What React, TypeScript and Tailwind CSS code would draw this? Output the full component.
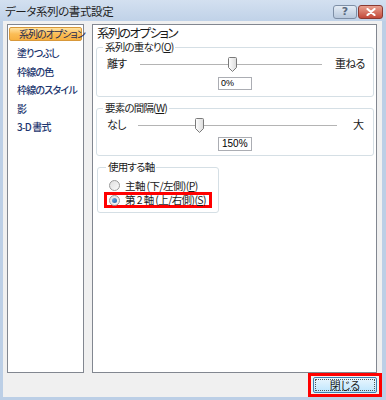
import React from "react";

const jp = { fontFamily: '"Noto Sans CJK JP", "Noto Sans", sans-serif' };

function Thumb() {
  return (
    <svg width="9" height="15" viewBox="0 0 9 15" className="block">
      <defs>
        <linearGradient id="tg" x1="0" x2="1" y1="0" y2="0">
          <stop offset="0" stopColor="#ffffff" />
          <stop offset="1" stopColor="#dcdcdc" />
        </linearGradient>
      </defs>
      <path d="M0.5 1.5 Q0.5 0.5 1.5 0.5 L7.5 0.5 Q8.5 0.5 8.5 1.5 L8.5 10.5 L4.5 14.5 L0.5 10.5 Z" fill="url(#tg)" stroke="#7a7a7a" />
    </svg>
  );
}

function SliderRow({ left, right, leftW, trackW, thumbX, gap }: { left: string; right: string; leftW: number; trackW: number; thumbX: number; gap: number }) {
  return (
    <div className="flex items-center h-[15px]">
      <div className="text-[11px] leading-[12px] tracking-[-0.8px] text-[#1a1a1a] -mt-[3px] whitespace-nowrap" style={{ width: leftW }}>{left}</div>
      <div className="relative h-[15px]" style={{ width: trackW }}>
        <div className="absolute left-0 right-0 top-[7px] h-[1px] bg-[#b4b4b4]" />
        <div className="absolute left-0 right-0 top-[8px] h-[1px] bg-[#ffffff]" />
        <div className="absolute top-0" style={{ left: thumbX }}>
          <Thumb />
        </div>
      </div>
      <div className="text-[11px] leading-[12px] tracking-[-0.8px] text-[#1a1a1a] -mt-[3px] whitespace-nowrap" style={{ marginLeft: gap }}>{right}</div>
    </div>
  );
}

function Radio({ checked }: { checked?: boolean }) {
  return (
    <div className="w-[11px] h-[11px] shrink-0 rounded-full border border-[#9a9a9a] bg-gradient-to-br from-[#e0e0e0] to-[#fafafa] flex items-center justify-center">
      {checked && <div className="w-[5px] h-[5px] rounded-full bg-gradient-to-br from-[#7ab8e8] to-[#1c5fa8]" />}
    </div>
  );
}

export default function App() {
  const navItems = ["塗りつぶし", "枠線の色", "枠線のスタイル", "影", "3-D 書式"];
  return (
    <div className="w-[386px] h-[400px] overflow-hidden bg-[#bccfe6] flex flex-col [font-feature-settings:'palt']" style={jp}>
      {/* title bar */}
      <div className="h-[21px] flex items-center bg-gradient-to-b from-[#d3e0f0] to-[#c0d2e8] pl-[5px] pr-[3px]">
        <div className="text-[11.5px] leading-[14px] tracking-[-0.4px] text-[#1e1e1e] mt-[1px] whitespace-nowrap">データ系列の書式設定</div>
        <div className="ml-auto flex gap-[1px] mt-[2px]">
          <div className="w-[24px] h-[14px] rounded-[3px] border border-[#7e8fa6] bg-gradient-to-b from-[#e4ecf5] to-[#b8c8dc] flex items-center justify-center text-[11px] leading-[11px] font-bold text-[#5a6a80]" style={{ fontFamily: '"DejaVu Sans", sans-serif' }}>?</div>
          <div className="w-[25px] h-[14px] rounded-[3px] border border-[#8a3a32] bg-gradient-to-b from-[#e8a090] to-[#c2483a] flex items-center justify-center">
            <svg width="10" height="8" viewBox="0 0 10 8">
              <path d="M1.5 1 L8.5 7 M8.5 1 L1.5 7" stroke="#ffffff" strokeWidth="2.2" strokeLinecap="round" />
            </svg>
          </div>
        </div>
      </div>
      {/* body */}
      <div className="flex-1 ml-[3px] mr-[4px] mb-[3px] bg-[#f0f0f0] flex flex-col">
        <div className="flex pt-[3px] pl-[4px] h-[352px]">
          {/* left nav */}
          <div className="w-[77px] h-[349px] bg-white border border-[#828790] pt-[2px] px-[1px]">
            <div className="h-[14px] rounded-[2px] border border-[#d8983a] bg-gradient-to-b from-[#ffe3a0] via-[#fbbd55] to-[#f7b040] flex items-center pl-[9px] text-[10px] leading-[12px] tracking-[-1px] text-[#1e2a50] whitespace-nowrap">系列のオプション</div>
            <div className="mt-[3px]">
              {navItems.map((t) => (
                <div key={t} className="h-[18.5px] flex items-center pl-[8px] text-[10px] leading-[12px] tracking-[-0.8px] font-medium text-[#1e3770] whitespace-nowrap">{t}</div>
              ))}
            </div>
          </div>
          {/* right panel */}
          <div className="ml-[8px] w-[285px] h-[349px] bg-white border border-[#828790] pl-[3px] pr-[2px]">
            <div className="pl-[1px] pt-[1px] h-[16px] text-[12.5px] leading-[13px] tracking-[-1.5px] text-[#1a1a1a] whitespace-nowrap">系列のオプション</div>
            <fieldset className="border border-[#d5dfe5] rounded-[3px] mt-[0px] pl-[10px] pb-[6px]">
              <legend className="ml-[-4px] px-[2px] text-[10.5px] leading-[12px] tracking-[-0.8px] text-[#1a1a1a] whitespace-nowrap">系列の重なり(<span className="underline">O</span>)</legend>
              <div className="mt-[4px]">
                <SliderRow left="離す" right="重ねる" leftW={33} trackW={182} thumbX={88} gap={13} />
              </div>
              <div className="mt-[5px] ml-[111px] w-[34px] h-[13px] border border-[#abadb3] bg-white text-[9px] leading-[11px] pl-[2px] text-black" style={{ fontFamily: '"Liberation Sans", sans-serif' }}>0%</div>
            </fieldset>
            <fieldset className="border border-[#d5dfe5] rounded-[3px] mt-[5px] pl-[10px] pb-[4px]">
              <legend className="ml-[-4px] px-[2px] text-[10.5px] leading-[12px] tracking-[-0.8px] text-[#1a1a1a] whitespace-nowrap">要素の間隔(<span className="underline">W</span>)</legend>
              <div className="mt-[4px]">
                <SliderRow left="なし" right="大" leftW={31} trackW={199} thumbX={57} gap={16} />
              </div>
              <div className="mt-[4px] ml-[111px] w-[34px] h-[14px] border border-[#abadb3] bg-white text-[10px] leading-[12px] pl-[3px] text-black" style={{ fontFamily: '"Liberation Sans", sans-serif' }}>150%</div>
            </fieldset>
            <fieldset className="border border-[#d5dfe5] rounded-[3px] mt-[5px] w-[122px] ml-[1px] pl-[6px] pb-[4px]">
              <legend className="ml-[2px] px-[2px] text-[10.5px] leading-[12px] tracking-[-0.8px] text-[#1a1a1a] whitespace-nowrap">使用する軸</legend>
              <div className="mt-[6px] flex items-center h-[13px] pl-[5px]">
                <Radio />
                <span className="ml-[5px] text-[10.5px] leading-[12px] tracking-[-0.6px] text-[#1a1a1a] whitespace-nowrap">主軸 (下/左側)(<span className="underline">P</span>)</span>
              </div>
              <div className="mt-[0px] w-[108px] h-[16px] border-[3px] border-[#ff0000] flex items-center pl-[2px]">
                <Radio checked />
                <span className="ml-[5px] text-[10.5px] leading-[12px] tracking-[-0.6px] text-[#1a1a1a] whitespace-nowrap">第 2 軸 (上/右側)(<span className="underline">S</span>)</span>
              </div>
            </fieldset>
          </div>
        </div>
        {/* bottom bar */}
        <div className="flex justify-end">
          <div className="w-[74px] h-[24px] border-[3px] border-[#ff0000] flex items-center justify-center">
            <div className="w-[64px] h-[16px] rounded-[2px] border border-[#3c7fb1] bg-gradient-to-b from-[#eaf6fd] to-[#bee6fd] flex items-center justify-center p-[1px]">
              <div className="w-full h-full border border-dotted border-[#555] flex items-center justify-center text-[11px] leading-[12px] text-[#1a1a1a]">閉じる</div>
            </div>
          </div>
        </div>
      </div>
    </div>
  );
}
